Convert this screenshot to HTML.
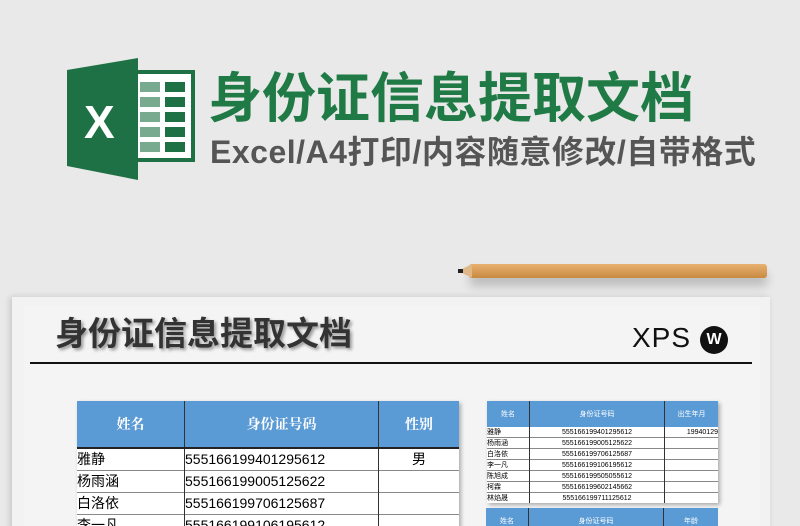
<!DOCTYPE html><html><head><meta charset="utf-8"><style>
html,body{margin:0;width:800px;height:526px;overflow:hidden}
body{background:#e9e9e9;font-family:"Liberation Sans","Noto Sans CJK SC",sans-serif;position:relative}
.a{position:absolute}
table{border-collapse:collapse;position:absolute}
td{padding:0}
</style></head><body>
<svg class="a" style="left:60px;top:55px" width="140" height="130">
<rect x="75" y="17" width="58" height="88" fill="#fff" stroke="#1e7145" stroke-width="4"/>
<g fill="#1e7145"><rect x="105" y="27" width="20" height="10"/><rect x="105" y="42" width="20" height="10"/><rect x="105" y="57" width="20" height="10"/><rect x="105" y="72" width="20" height="10"/><rect x="105" y="87" width="20" height="10"/>
<rect x="80" y="27" width="20" height="10" opacity=".6"/><rect x="80" y="42" width="20" height="10" opacity=".6"/><rect x="80" y="57" width="20" height="10" opacity=".6"/><rect x="80" y="72" width="20" height="10" opacity=".6"/><rect x="80" y="87" width="20" height="10" opacity=".6"/></g>
<polygon points="7,15 78,3 78,125 7,111" fill="#1e7145"/>
<text x="24" y="83" font-family="Liberation Sans" font-weight="bold" font-size="46" fill="#fff">X</text>
</svg>
<div class="a" style="left:208px;top:66px;font-size:54px;font-weight:bold;color:#1f7a45;line-height:66px">身份证信息提取文档</div>
<div class="a" style="left:210px;top:132px;font-size:32px;letter-spacing:0.5px;font-weight:bold;color:#555;line-height:40px">Excel/A4打印/内容随意修改/自带格式</div>
<div class="a" style="left:470px;top:264px;width:297px;height:14px;background:linear-gradient(#e8b070,#c98a40);border-radius:0 3px 3px 0;box-shadow:0 8px 10px rgba(0,0,0,.2)"></div>
<div class="a" style="left:458px;top:264px;width:0;height:0;border-top:7px solid transparent;border-bottom:7px solid transparent;border-right:14px solid #e0b888"></div>
<div class="a" style="left:458px;top:269px;width:5px;height:4px;background:#222"></div>
<div class="a" style="left:12px;top:297px;width:758px;height:240px;background:#f2f2f2;box-shadow:-2px 0 6px rgba(0,0,0,.15)"></div>
<div class="a" style="left:24px;top:305px;width:736px;height:230px;background:#f4f4f4"></div>
<div class="a" style="left:55px;top:312px;font-size:33px;font-weight:bold;color:#333;text-shadow:2px 2px 3px rgba(0,0,0,.4);line-height:44px">身份证信息提取文档</div>
<div class="a" style="left:30px;top:362px;width:722px;height:2px;background:#111"></div>
<div class="a" style="left:632px;top:322px;font-size:28px;color:#111;letter-spacing:1px;font-weight:300">XPS</div>
<div class="a" style="left:700px;top:326px;width:28px;height:28px;border-radius:50%;background:#111;color:#fff;font-weight:bold;font-size:16px;text-align:center;line-height:28px">W</div>
<table style="left:77px;top:401px;font-size:14px;box-shadow:2px 2px 4px rgba(0,0,0,.3)">
<tr style="background:#5b9bd5;color:#fff;height:47px;font-family:'Liberation Serif','Noto Serif CJK SC',serif;font-weight:bold;text-align:center"><td style="width:107px;border-right:1px solid #333">姓名</td><td style="width:193px;border-right:1px solid #333">身份证号码</td><td style="width:80px">性别</td></tr>
<tr style="background:#fff;height:22px;border-top:2px solid #222;border-bottom:1px solid #888"><td style="border-right:1px solid #333">雅静</td><td style="border-right:1px solid #333">555166199401295612</td><td style="text-align:center">男</td></tr>
<tr style="background:#fff;height:22px;border-bottom:1px solid #888"><td style="border-right:1px solid #333">杨雨涵</td><td style="border-right:1px solid #333">555166199005125622</td><td></td></tr>
<tr style="background:#fff;height:22px;border-bottom:1px solid #888"><td style="border-right:1px solid #333">白洛依</td><td style="border-right:1px solid #333">555166199706125687</td><td></td></tr>
<tr style="background:#fff;height:22px"><td style="border-right:1px solid #333">李一凡</td><td style="border-right:1px solid #333">555166199106195612</td><td></td></tr>
</table>
<table style="left:487px;top:401px;font-size:7px;box-shadow:2px 2px 4px rgba(0,0,0,.3)">
<tr style="background:#5b9bd5;color:#fff;height:26px;text-align:center"><td style="width:42px;border-right:1px solid #333">姓名</td><td style="width:134px;border-right:1px solid #333">身份证号码</td><td style="width:53px">出生年月</td></tr>
<tr style="background:#fff;height:9.7px;border-bottom:1px solid #888"><td>雅静</td><td style="text-align:center;border-left:1px solid #333;border-right:1px solid #333">555166199401295612</td><td style="text-align:right">19940129</td></tr>
<tr style="background:#fff;height:9.7px;border-bottom:1px solid #888"><td>杨雨涵</td><td style="text-align:center;border-left:1px solid #333;border-right:1px solid #333">555166199005125622</td><td></td></tr>
<tr style="background:#fff;height:9.7px;border-bottom:1px solid #888"><td>白洛依</td><td style="text-align:center;border-left:1px solid #333;border-right:1px solid #333">555166199706125687</td><td></td></tr>
<tr style="background:#fff;height:9.7px;border-bottom:1px solid #888"><td>李一凡</td><td style="text-align:center;border-left:1px solid #333;border-right:1px solid #333">555166199106195612</td><td></td></tr>
<tr style="background:#fff;height:9.7px;border-bottom:1px solid #888"><td>陈旭成</td><td style="text-align:center;border-left:1px solid #333;border-right:1px solid #333">555166199505055612</td><td></td></tr>
<tr style="background:#fff;height:9.7px;border-bottom:1px solid #888"><td>柯霖</td><td style="text-align:center;border-left:1px solid #333;border-right:1px solid #333">555166199602145662</td><td></td></tr>
<tr style="background:#fff;height:9.7px"><td>林焰晟</td><td style="text-align:center;border-left:1px solid #333;border-right:1px solid #333">555166199711125612</td><td></td></tr>
</table>
<table style="left:486px;top:508px;font-size:7px">
<tr style="background:#5b9bd5;color:#fff;height:26px;text-align:center"><td style="width:42px;border-right:1px solid #333">姓名</td><td style="width:134px;border-right:1px solid #333">身份证号码</td><td style="width:54px">年龄</td></tr>
</table>
</body></html>
